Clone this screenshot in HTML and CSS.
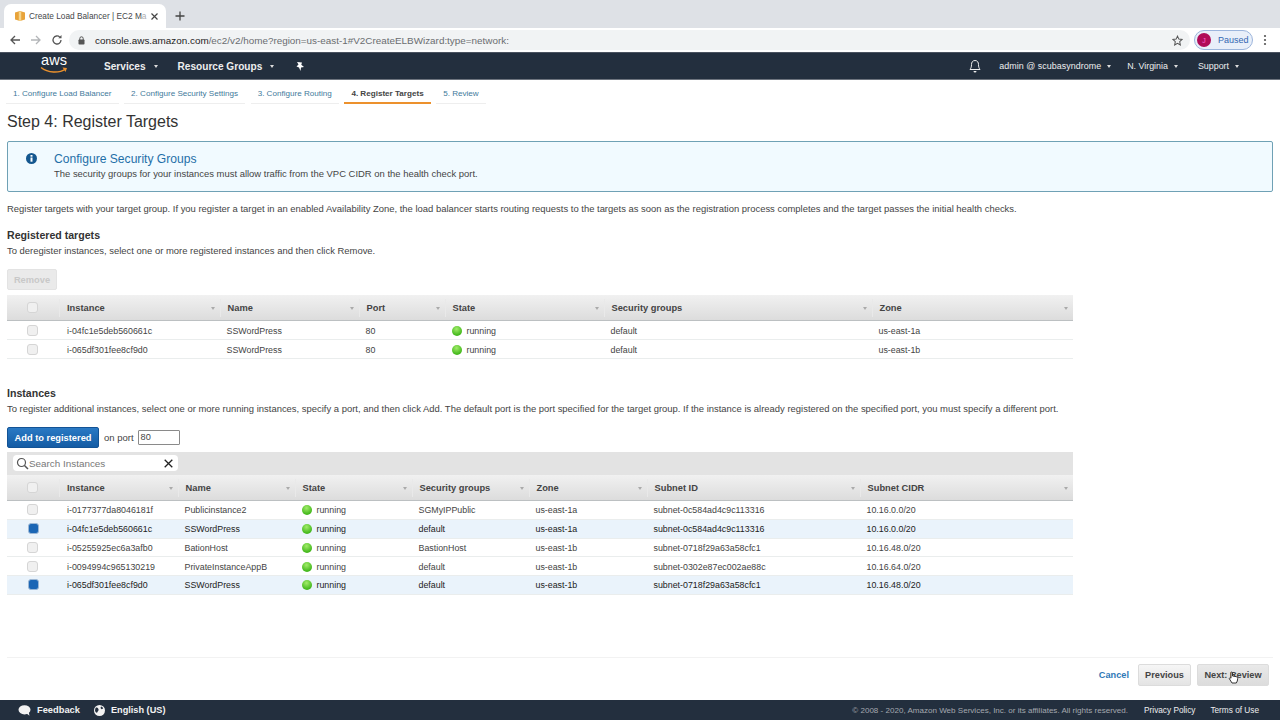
FILE: index.html
```html
<!DOCTYPE html>
<html lang="en">
<head>
<meta charset="utf-8">
<title>Create Load Balancer | EC2 Management Console</title>
<link rel="stylesheet" href="styles.css">
</head>
<body>
<div class="tabstrip">
  <div class="tab">
    <svg class="favicon" width="12" height="12" viewBox="0 0 12 12"><path d="M1 2.500 6 1l5 1.500v7L6 11 1 9.500z" fill="#e8a33a"/><path d="M4.800 1.500h2.400v9.300H4.800z" fill="#f6d58c"/></svg>
    <span class="tabtitle">Create Load Balancer | EC2 M<span class="fade">a</span></span>
    <svg width="9" height="9" viewBox="0 0 9 9" class="tabclose"><path d="M1.500 1.500l6 6M7.500 1.500l-6 6" stroke="#444" stroke-width="1.200"/></svg>
  </div>
  <svg class="newtab" width="10" height="10" viewBox="0 0 10 10"><path d="M5 .5v9M.5 5h9" stroke="#444" stroke-width="1.300"/></svg>
</div>
<div class="toolbar">
  <svg class="navicon" width="12" height="12" viewBox="0 0 12 12"><path d="M11 6H2M6 2 2 6l4 4" fill="none" stroke="#555" stroke-width="1.300"/></svg>
  <svg class="navicon" width="12" height="12" viewBox="0 0 12 12"><path d="M1 6h9M6 2l4 4-4 4" fill="none" stroke="#b4b6b9" stroke-width="1.300"/></svg>
  <svg class="navicon" width="12" height="12" viewBox="0 0 12 12"><path d="M10 6a4 4 0 1 1-1.200-2.900" fill="none" stroke="#555" stroke-width="1.300"/><path d="M10.500 1v3.200H7.300z" fill="#555"/></svg>
  <div class="omnibox">
    <svg width="7" height="9" viewBox="0 0 7 9"><rect x=".5" y="3.500" width="6" height="5" rx=".8" fill="#555"/><path d="M1.800 4V2.500a1.700 1.700 0 0 1 3.400 0V4" fill="none" stroke="#555"/></svg>
    <span class="url"><b>console.aws.amazon.com</b>/ec2/v2/home?region=us-east-1#V2CreateELBWizard:type=network:</span>
    <svg class="star" width="11" height="11" viewBox="0 0 12 12"><path d="M6 1.200 7.500 4.500l3.500.4-2.600 2.400.7 3.500L6 9l-3.100 1.800.7-3.500L1 4.900l3.500-.4z" fill="none" stroke="#555" stroke-width="1.100"/></svg>
  </div>
  <div class="paused"><span class="avatar">J</span><span>Paused</span></div>
  <svg class="kebab" width="4" height="12" viewBox="0 0 4 12"><circle cx="2" cy="2" r="1.100" fill="#555"/><circle cx="2" cy="6" r="1.100" fill="#555"/><circle cx="2" cy="10" r="1.100" fill="#555"/></svg>
</div>
<nav class="awsnav">
  <div class="logo"><span>aws</span><svg width="28" height="8" viewBox="0 0 28 8"><path d="M1 1.500C8 7 19 7.500 25.500 3" fill="none" stroke="#ec912d" stroke-width="1.500"/><path d="M22.500 1.500l4.500.5-1.500 4z" fill="#ec912d"/></svg></div>
  <span class="navitem services">Services</span><i class="caret big"></i>
  <span class="navitem groups">Resource Groups</span><i class="caret big"></i>
  <svg class="pin" width="10" height="10" viewBox="0 0 10 10"><path d="M2 1l5 .5-.7 2.200L9 6 6 6.500 5.500 10 4 6.500 1.500 5.500 3.500 3.500z" fill="#fff"/></svg>
  <span class="navspacer"></span>
  <svg class="bell" width="12" height="14" viewBox="0 0 12 14"><path d="M6 1.500c-2.500 0-3.500 2-3.500 4 0 2.500-.5 3.500-1.500 5h10c-1-1.500-1.500-2.500-1.500-5 0-2-1-4-3.500-4z" fill="none" stroke="#eee" stroke-width="1"/><path d="M4.500 12h3a1.500 1.500 0 0 1-3 0z" fill="#eee"/></svg>
  <span class="navsmall admin">admin @ scubasyndrome</span><i class="caret"></i>
  <span class="navsmall region">N. Virginia</span><i class="caret"></i>
  <span class="navsmall support">Support</span><i class="caret"></i>
</nav>
<main class="page">
  <div class="wizard">
    <a class="step">1. Configure Load Balancer</a>
    <a class="step">2. Configure Security Settings</a>
    <a class="step">3. Configure Routing</a>
    <a class="step active">4. Register Targets</a>
    <a class="step">5. Review</a>
  </div>
  <h1>Step 4: Register Targets</h1>
  <div class="alert">
    <svg class="info" width="11" height="11" viewBox="0 0 11 11"><circle cx="5.500" cy="5.500" r="5.500" fill="#14578f"/><rect x="4.500" y="4.500" width="2" height="4.200" fill="#fff"/><rect x="4.500" y="2" width="2" height="1.700" fill="#fff"/></svg>
    <div>
      <div class="alert-title">Configure Security Groups</div>
      <div class="alert-text">The security groups for your instances must allow traffic from the VPC CIDR on the health check port.</div>
    </div>
  </div>
  <p class="lead">Register targets with your target group. If you register a target in an enabled Availability Zone, the load balancer starts routing requests to the targets as soon as the registration process completes and the target passes the initial health checks.</p>
  <h2>Registered targets</h2>
  <p class="hint">To deregister instances, select one or more registered instances and then click Remove.</p>
  <button class="btn-remove">Remove</button>
  <div class="table t1">
    <div class="row head">
      <div class="cell chk"><i class="box"></i></div>
      <div class="cell">Instance<i class="sort"></i></div><div class="cell">Name<i class="sort"></i></div><div class="cell">Port<i class="sort"></i></div><div class="cell">State<i class="sort"></i></div><div class="cell">Security groups<i class="sort"></i></div><div class="cell">Zone<i class="sort"></i></div>
    </div>
    <div class="row">
      <div class="cell chk"><i class="box"></i></div>
      <div class="cell">i-04fc1e5deb560661c</div><div class="cell">SSWordPress</div><div class="cell">80</div><div class="cell"><i class="dot"></i>running</div><div class="cell">default</div><div class="cell">us-east-1a</div>
    </div>
    <div class="row">
      <div class="cell chk"><i class="box"></i></div>
      <div class="cell">i-065df301fee8cf9d0</div><div class="cell">SSWordPress</div><div class="cell">80</div><div class="cell"><i class="dot"></i>running</div><div class="cell">default</div><div class="cell">us-east-1b</div>
    </div>
  </div>
  <h2 class="second">Instances</h2>
  <p class="hint">To register additional instances, select one or more running instances, specify a port, and then click Add. The default port is the port specified for the target group. If the instance is already registered on the specified port, you must specify a different port.</p>
  <div class="addrow">
    <button class="btn-add">Add to registered</button>
    <span class="onport">on port</span>
    <span class="portinput">80</span>
  </div>
  <div class="searchbar">
    <div class="search">
      <svg width="13" height="13" viewBox="0 0 13 13"><circle cx="5.500" cy="5.500" r="4" fill="none" stroke="#555" stroke-width="1.200"/><path d="M8.500 8.500 12 12" stroke="#555" stroke-width="1.500"/></svg>
      <span class="searchtext">Search Instances</span>
      <svg class="clear" width="9" height="9" viewBox="0 0 9 9"><path d="M.7.700l7.600 7.600M8.300.700.700 8.300" stroke="#222" stroke-width="1.300"/></svg>
    </div>
  </div>
  <div class="table t2">
    <div class="row head">
      <div class="cell chk"><i class="box"></i></div>
      <div class="cell">Instance<i class="sort"></i></div><div class="cell">Name<i class="sort"></i></div><div class="cell">State<i class="sort"></i></div><div class="cell">Security groups<i class="sort"></i></div><div class="cell">Zone<i class="sort"></i></div><div class="cell">Subnet ID<i class="sort"></i></div><div class="cell">Subnet CIDR<i class="sort"></i></div>
    </div>
    <div class="row">
      <div class="cell chk"><i class="box"></i></div>
      <div class="cell">i-0177377da8046181f</div><div class="cell">Publicinstance2</div><div class="cell"><i class="dot"></i>running</div><div class="cell">SGMyIPPublic</div><div class="cell">us-east-1a</div><div class="cell">subnet-0c584ad4c9c113316</div><div class="cell">10.16.0.0/20</div>
    </div>
    <div class="row selected">
      <div class="cell chk"><i class="box on"></i></div>
      <div class="cell">i-04fc1e5deb560661c</div><div class="cell">SSWordPress</div><div class="cell"><i class="dot"></i>running</div><div class="cell">default</div><div class="cell">us-east-1a</div><div class="cell">subnet-0c584ad4c9c113316</div><div class="cell">10.16.0.0/20</div>
    </div>
    <div class="row">
      <div class="cell chk"><i class="box"></i></div>
      <div class="cell">i-05255925ec6a3afb0</div><div class="cell">BationHost</div><div class="cell"><i class="dot"></i>running</div><div class="cell">BastionHost</div><div class="cell">us-east-1b</div><div class="cell">subnet-0718f29a63a58cfc1</div><div class="cell">10.16.48.0/20</div>
    </div>
    <div class="row">
      <div class="cell chk"><i class="box"></i></div>
      <div class="cell">i-0094994c965130219</div><div class="cell">PrivateInstanceAppB</div><div class="cell"><i class="dot"></i>running</div><div class="cell">default</div><div class="cell">us-east-1b</div><div class="cell">subnet-0302e87ec002ae88c</div><div class="cell">10.16.64.0/20</div>
    </div>
    <div class="row selected">
      <div class="cell chk"><i class="box on"></i></div>
      <div class="cell">i-065df301fee8cf9d0</div><div class="cell">SSWordPress</div><div class="cell"><i class="dot"></i>running</div><div class="cell">default</div><div class="cell">us-east-1b</div><div class="cell">subnet-0718f29a63a58cfc1</div><div class="cell">10.16.48.0/20</div>
    </div>
  </div>
</main>
<div class="actions">
  <a class="cancel">Cancel</a>
  <button class="btn">Previous</button>
  <button class="btn next">Next: Review
    <svg class="cursor" width="11" height="13" viewBox="0 0 11 13"><path d="M3 1.500c.6-.8 1.500-.4 1.500.5v3l3.500.6c1.200.3 1.800.9 1.700 2l-.4 2.400-1 2H4L1.500 8c-.6-.8.3-1.700 1.500-.8z" fill="#fff" stroke="#222" stroke-width=".9"/></svg>
  </button>
</div>
<footer class="foot">
  <svg width="13" height="11" viewBox="0 0 13 11"><ellipse cx="6.500" cy="4.800" rx="6" ry="4.600" fill="#f2f2f2"/><path d="M8 8l3.500 2.800L10.500 6z" fill="#f2f2f2"/></svg>
  <span class="feedback">Feedback</span>
  <svg class="globe" width="11" height="11" viewBox="0 0 11 11"><circle cx="5.500" cy="5.500" r="5.500" fill="#f2f2f2"/><path d="M1.500 3c1-.8 2-.6 2.500.3S5 5 4.300 5.700 3.600 7.300 3 7.700 1 6.500 1 5.200zM7 1.500c1 0 2 1 2.200 2L7.500 4.200 6.500 3z" fill="#232f3e"/></svg>
  <span class="lang">English (US)</span>
  <span class="navspacer"></span>
  <span class="copy">© 2008 - 2020, Amazon Web Services, Inc. or its affiliates. All rights reserved.</span>
  <span class="legal privacy">Privacy Policy</span>
  <span class="legal terms">Terms of Use</span>
</footer>
</body>
</html>
```
FILE: styles.css
```css
* { box-sizing: border-box; }
html, body { margin: 0; padding: 0; }
body {
  width: 1280px; height: 720px; overflow: hidden;
  display: flex; flex-direction: column;
  font-family: "Liberation Sans", Arial, sans-serif;
  color: #444; background: #fff; font-size: 9.45px;
}
p, h1, h2 { margin: 0; }
button { font-family: inherit; }

.tabstrip { height: 28px; background: #dee1e6; display: flex; align-items: flex-end; padding-left: 4px; flex: none; }
.tab { width: 162px; height: 24px; background: #fff; border-radius: 7px 7px 0 0; display: flex; align-items: center; padding-left: 10px; color: #45474a; font-size: 8.3px; }
.favicon { margin-right: 3px; }
.tabtitle { width: 118px; white-space: nowrap; }
.fade { opacity: .45; }
.tabclose { margin-left: 3px; }
.newtab { margin: 0 0 7px 9px; }

.toolbar { height: 24px; background: #fff; display: flex; align-items: center; flex: none; padding-left: 9px; }
.navicon { margin-right: 9px; }
.omnibox { margin-left: -3px; width: 1121px; height: 20px; border-radius: 10px; background: #f1f3f4; display: flex; align-items: center; padding-left: 9px; }
.url { margin-left: 10px; font-size: 9.9px; color: #6a6d70; flex: 1; white-space: nowrap; }
.url b { font-weight: normal; color: #222; }
.star { margin-right: 7px; }
.paused { margin-left: 4px; width: 59px; height: 20px; border: 1px solid #9cb5dc; border-radius: 10px; background: #e9eff9; display: flex; align-items: center; padding-left: 2px; color: #3367b2; font-size: 9px; gap: 7px; }
.avatar { width: 14px; height: 14px; border-radius: 50%; background: #b00b57; color: #f6c; font-size: 7px; display: flex; align-items: center; justify-content: center; }
.kebab { margin-left: 10px; }

.awsnav { height: 28px; background: #232f3e; border-top: 1px solid #4b5360; border-bottom: 1px solid #6d747e; display: flex; align-items: center; flex: none; color: #eee; }
.logo { width: 28px; margin-left: 40px; display: flex; flex-direction: column; align-items: center; color: #fff; font-size: 14.5px; line-height: 11px; margin-top: -3px; }
.logo span { height: 11px; }
.logo svg { display: block; }
.navitem { font-size: 10.1px; font-weight: bold; }
.services { margin-left: 36px; }
.groups { margin-left: 20px; }
.navsmall { font-size: 8.9px; }
.admin { letter-spacing: .05px; }
.caret { width: 0; height: 0; border: 2.5px solid transparent; border-top: 3px solid #ddd; border-bottom: 0; margin-left: 6px; }
.caret.big { margin-left: 8px; }
.pin { margin-left: 21px; }
.navspacer { flex: 1; }
.bell { margin-right: 18px; }
.region { margin-left: 16px; }
.support { margin-left: 20px; }
.awsnav .caret:last-child { margin-right: 41px; }

.page { flex: 1; padding: 0 7px; min-height: 0; border-left: 1px solid #f2f2f2; margin-left: -1px; }
.wizard { display: flex; gap: 5.5px; height: 24px; margin-left: -1px; }
.step { padding: 9px 7px 0; height: 24px; border-bottom: 1px solid #eee; color: #3f7a9b; font-size: 8.1px; white-space: nowrap; }
.step.active { color: #444; font-weight: bold; font-size: 8.1px; border-bottom: 2px solid #ec912d; }
h1 { font-size: 16px; font-weight: normal; color: #333; margin-top: 8px; line-height: 19px; }
.alert { margin-top: 10px; width: 1266px; height: 51px; background: #f1faff; border: 1px solid #6fa1b5; border-radius: 2px; display: flex; padding: 10px 0 0 18px; }
.info { margin-top: 1px; margin-right: 17px; flex: none; }
.alert-title { font-size: 12.1px; color: #1f6fa8; line-height: 14px; }
.alert-text { margin-top: 2px; line-height: 12px; color: #444; }
.lead { margin-top: 11px; line-height: 12px; }
h2 { font-size: 10.6px; font-weight: bold; color: #333; line-height: 13px; margin-top: 14px; }
.hint { margin-top: 3px; line-height: 12px; }
.btn-remove { display: block; margin-top: 12px; width: 50px; height: 21px; padding: 0; background: #eaeaea; border: 1px solid #e3e3e3; border-radius: 2px; color: #c8c8c8; font-size: 9.3px; font-weight: bold; }

.table { width: 1066px; font-size: 8.85px; }
.t1 { margin-top: 5px; }
.row { display: grid; height: 19px; border-bottom: 1px solid #eaeded; align-items: center; }
.t2 .row { height: 18.75px; }
.t1 .row { grid-template-columns: 52px 161px 139px 86px 159px 268px 201px; }
.t2 .row { grid-template-columns: 52px 119px 117px 117px 117px 118px 213px 213px; }
.row.selected { background: #eaf3fb; color: #222; }
.cell { padding-left: 6.5px; display: flex; align-items: center; height: 100%; white-space: nowrap; position: relative; }
.row:not(.head) .cell:not(.chk) { padding-top: 1px; }
.cell.chk { padding-left: 20px; }
.chk + .cell { padding-left: 8px; }
.t1 .row.head, .t2 .row.head { height: 26px; background: linear-gradient(#f1f1f1, #dcdcdc); border-bottom: 1px solid #bcc0c2; color: #444; font-weight: bold; font-size: 9.3px; }
.head .chk + .cell { padding-left: 7px; }
.head .cell + .cell { border-left: 1px solid #e9e9e9; height: 18px; }
.sort { position: absolute; right: 5px; top: 8px; width: 0; height: 0; border: 2.5px solid transparent; border-top: 3px solid #aaa; border-bottom: 0; }
.box { width: 11px; height: 11px; border-radius: 3px; background: #f0f0f0; border: 1px solid #d5d5d5; display: block; }
.box.on { background: #1b66b5; border-color: #9cb8d6; margin-left: 1px; }
.dot { width: 10px; height: 10px; border-radius: 50%; background: radial-gradient(circle at 45% 30%, #a2ec6a, #43b81c 70%); margin: 0 5px 0 0; flex: none; }
.second { margin-top: 28px; }
.addrow { display: flex; align-items: center; margin-top: 12px; height: 21px; }
.btn-add { width: 92px; height: 21px; padding: 0; background: linear-gradient(#2a79c4, #145ca4); border: 1px solid #135395; border-radius: 2px; color: #fff; font-size: 9.3px; font-weight: bold; }
.onport { margin-left: 5px; font-size: 9.5px; }
.portinput { margin-left: 4px; width: 42px; height: 15px; border: 1px solid #8a8a8a; border-radius: 1px; padding-left: 2px; line-height: 13px; font-size: 9.2px; }
.searchbar { margin-top: 4px; width: 1066px; height: 23px; background: #e3e3e3; padding: 3px 0 0 6px; }
.search { width: 165px; height: 16px; background: #fff; border-radius: 4px; display: flex; align-items: center; padding-left: 3px; }
.searchtext { color: #777; font-size: 9.9px; flex: 1; }
.clear { margin-right: 5px; }

.actions { height: 43px; flex: none; margin: 0 7px; border-top: 1px solid #f2f2f2; display: flex; justify-content: flex-end; align-items: center; padding: 0 4px 8px 0; }
.cancel { color: #2f78b7; font-weight: bold; font-size: 9.2px; margin-right: 9px; }
.btn { height: 22px; padding: 0; width: 53px; background: linear-gradient(#f6f6f6, #e4e4e4); border: 1px solid #dcdcdc; border-radius: 2px; color: #444; font-weight: bold; font-size: 9.2px; position: relative; }
.next { width: 72px; margin-left: 6px; background: linear-gradient(#e9e9e9, #dcdcdc); }
.cursor { position: absolute; left: 30px; top: 6px; }

.foot { height: 20px; flex: none; background: #232f3e; display: flex; align-items: center; padding-left: 18px; color: #f2f2f2; }
.feedback { margin-left: 6px; font-weight: bold; font-size: 9.3px; }
.globe { margin-left: 14px; }
.lang { margin-left: 6px; font-weight: bold; font-size: 9.2px; }
.copy { color: #a3a8ae; font-size: 8.05px; }
.legal { font-size: 8.25px; color: #eee; }
.privacy { margin-left: 16px; }
.terms { margin-left: 15px; margin-right: 21px; }
```
